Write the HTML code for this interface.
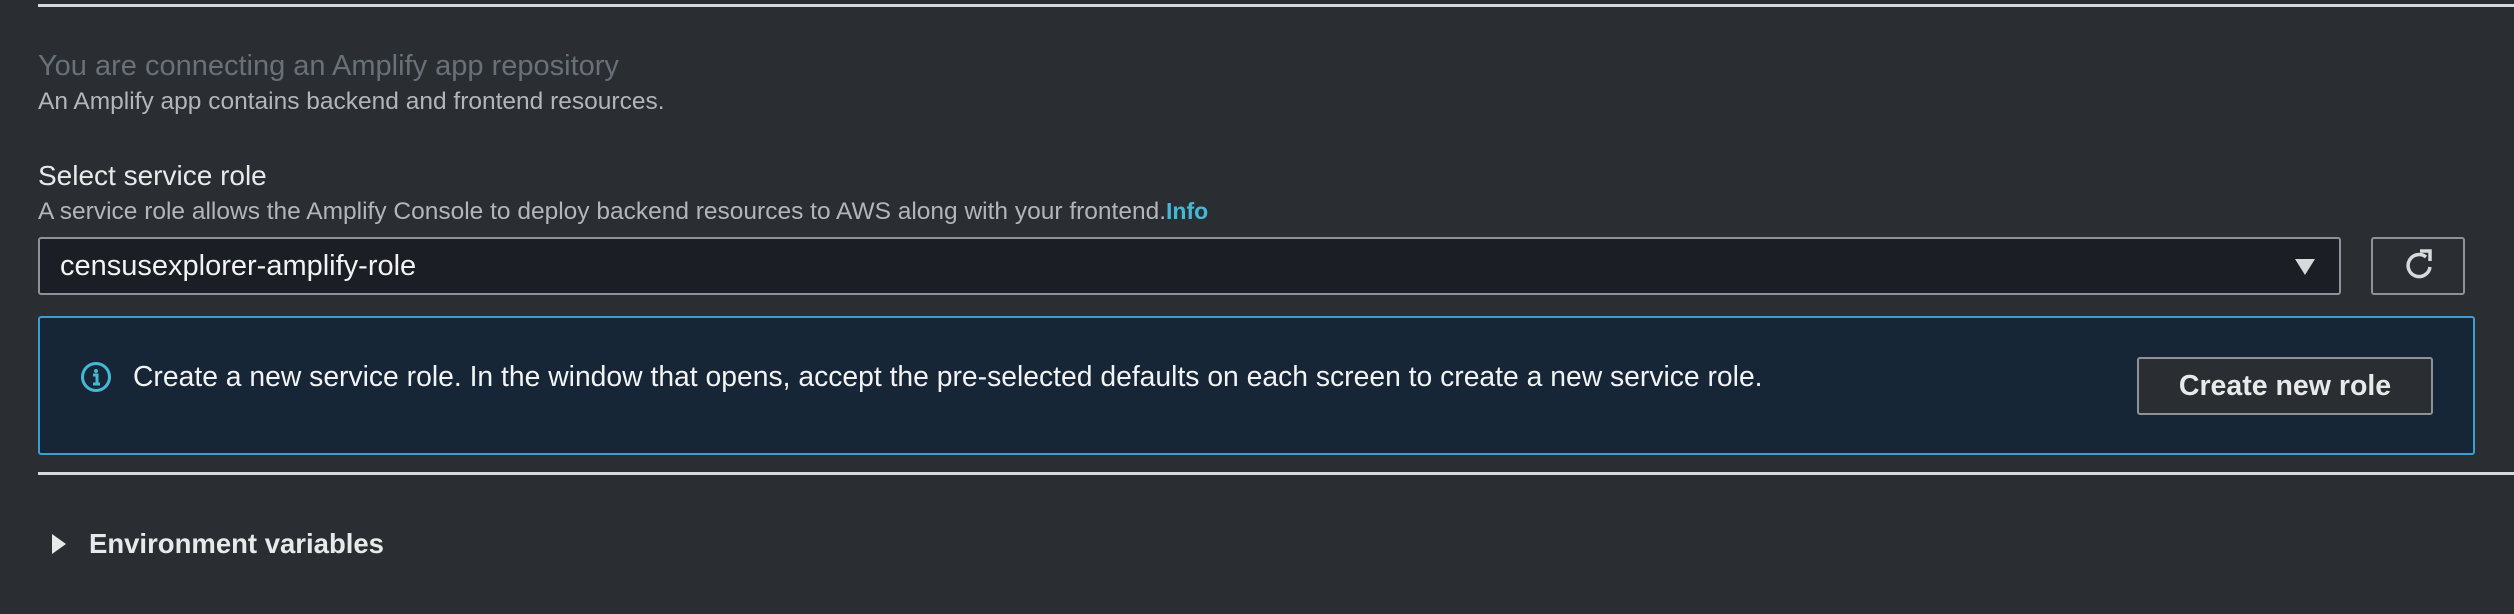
<!DOCTYPE html>
<html><head><meta charset="utf-8"><style>
*{margin:0;padding:0;box-sizing:border-box}
body{width:2514px;height:614px;background:#2a2d32;font-family:"Liberation Sans",sans-serif;position:relative;overflow:hidden;color:#d5dbdb}
.a{position:absolute;white-space:nowrap;line-height:1}
.hl{position:absolute;left:38px;right:0;height:3px;background:#d5dbdb}
</style></head><body>
<div class="hl" style="top:4px"></div>
<div class="a" style="left:38px;top:52px;font-size:29px;color:#687078">You are connecting an Amplify app repository</div>
<div class="a" style="left:38px;top:90px;font-size:24.5px;color:#b0b6ba">An Amplify app contains backend and frontend resources.</div>
<div class="a" style="left:38px;top:162px;font-size:28px;color:#e8eaea">Select service role</div>
<div class="a" style="left:38px;top:200px;font-size:24.5px;color:#b0b6ba">A service role allows the Amplify Console to deploy backend resources to AWS along with your frontend.<b style="color:#44b9d6;font-size:23px">Info</b></div>
<div style="position:absolute;left:38px;top:237px;width:2303px;height:58px;background:#1b1e24;border:2px solid #8d9396;border-radius:3px"></div>
<div class="a" style="left:60px;top:252px;font-size:29px;color:#f2f3f3">censusexplorer-amplify-role</div>
<svg style="position:absolute;left:2294px;top:258px" width="22" height="18"><path d="M1 1h20L11 17z" fill="#d5dbdb"/></svg>
<div style="position:absolute;left:2371px;top:237px;width:94px;height:58px;border:2px solid #8d9396;border-radius:3px"></div>
<svg style="position:absolute;left:2401px;top:248px" width="36" height="36" viewBox="0 0 36 36"><path d="M25 9A11 11 0 1 0 29 19" fill="none" stroke="#d5dbdb" stroke-width="3.5"/><path d="M19 3h10v10" fill="none" stroke="#d5dbdb" stroke-width="3.5"/></svg>
<div style="position:absolute;left:38px;top:316px;width:2437px;height:139px;background:#172637;border:2px solid #3a9fd0;border-radius:3px"></div>
<svg style="position:absolute;left:80px;top:361px" width="32" height="32" viewBox="0 0 32 32"><circle cx="16" cy="16" r="13.5" fill="none" stroke="#44b9d6" stroke-width="3"/><circle cx="16" cy="10" r="2" fill="#44b9d6"/><path d="M13 14h4v8M13 23h7" stroke="#44b9d6" stroke-width="3" fill="none"/></svg>
<div class="a" style="left:133px;top:362px;font-size:28.3px;color:#f2f3f3">Create a new service role. In the window that opens, accept the pre-selected defaults on each screen to create a new service role.</div>
<div style="position:absolute;left:2137px;top:357px;width:296px;height:58px;border:2px solid #8d9396;border-radius:3px;background:#2a2d32;font-weight:bold;font-size:28.5px;line-height:54px;text-align:center;color:#e8eaea">Create new role</div>
<div class="hl" style="top:472px"></div>
<svg style="position:absolute;left:51px;top:533px" width="16" height="22"><path d="M1 1L15 11L1 21z" fill="#e8eaea"/></svg>
<div class="a" style="left:89px;top:530px;font-size:27.5px;font-weight:bold;color:#e8eaea">Environment variables</div>
</body></html>
